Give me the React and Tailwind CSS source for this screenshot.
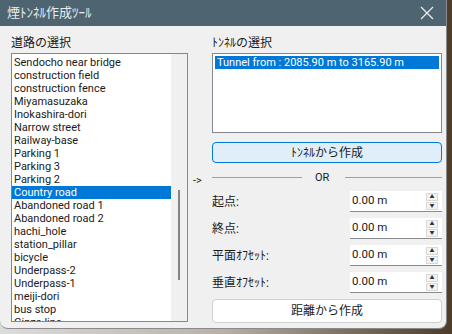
import React from "react";

const roads = [
  "Sendocho near bridge",
  "construction field",
  "construction fence",
  "Miyamasuzaka",
  "Inokashira-dori",
  "Narrow street",
  "Railway-base",
  "Parking 1",
  "Parking 3",
  "Parking 2",
  "Country road",
  "Abandoned road 1",
  "Abandoned road 2",
  "hachi_hole",
  "station_pillar",
  "bicycle",
  "Underpass-2",
  "Underpass-1",
  "meiji-dori",
  "bus stop",
  "Ginza line",
];

const fields = ["起点:", "終点:", "平面ｵﾌｾｯﾄ:", "垂直ｵﾌｾｯﾄ:"];

function SpinBox() {
  return (
    <div className="flex h-[21px] w-[92px] items-center bg-white border-b border-[#8a8a8a]">
      <span className="flex-1 pl-[2px] text-[11.5px] text-[#1a1a1a]">0.00 m</span>
      <div className="mr-[4px] flex flex-col gap-[1px]">
        <span className="flex h-[8px] w-[12px] items-center justify-center border border-[#d8d8d8] bg-[#f3f3f3] text-[5px] leading-none text-[#333]">
          ▲
        </span>
        <span className="flex h-[8px] w-[12px] items-center justify-center border border-[#d8d8d8] bg-[#f3f3f3] text-[5px] leading-none text-[#333]">
          ▼
        </span>
      </div>
    </div>
  );
}

export default function App() {
  return (
    <div
      className="w-[452px] h-[334px] overflow-hidden bg-gradient-to-r from-[#dcdcdc] via-[#b8b0a4] to-[#4e3c2a]"
      style={{ fontFamily: 'Roboto, "Noto Sans CJK JP", sans-serif' }}>
      <div className="flex h-[329px] w-[447px] flex-col overflow-hidden rounded-b-[8px] border-r border-b border-[#8a8a8a] bg-[#f0f0f0]">
        {/* title bar */}
        <div className="flex h-[26px] items-center justify-between bg-[#4f6471] pl-[7px] pr-[10px]">
          <span className="text-[13px] text-[#e8ecef]">煙ﾄﾝﾈﾙ作成ﾂｰﾙ</span>
          <svg width="14" height="14" viewBox="0 0 14 14" className="mr-[2px]">
            <path d="M1 1 L13 13 M13 1 L1 13" stroke="#e8ecef" strokeWidth="1.3" />
          </svg>
        </div>

        <div className="flex flex-1 pl-[11px] pt-[7px] text-[12px] text-[#1a1a1a]">
          {/* roads */}
          <div className="flex w-[177px] flex-col">
            <div className="h-[20px] text-[12px] leading-[20px]">道路の選択</div>
            <div className="flex h-[269px] border border-[#828790] bg-white">
              <div className="flex-1 overflow-hidden pt-[2px] text-[11px]">
                {roads.map((r) => (
                  <div
                    key={r}
                    className={`h-[13px] overflow-hidden pl-[2px] leading-[13px] whitespace-nowrap ${
                      r === "Country road" ? "bg-[#0078d7] text-white" : ""
                    }`}>
                    {r}
                  </div>
                ))}
              </div>
              <div className="w-[16px] bg-[#f0f0f0] pt-[136px] flex justify-center">
                <div className="h-[90px] w-[2px] bg-[#858585]" />
              </div>
            </div>
          </div>

          {/* arrow column */}
          <div className="w-[24px] pt-[140px] pl-[5px] text-[11px]">-&gt;</div>

          {/* tunnel side */}
          <div className="flex w-[230px] flex-col">
            <div className="h-[20px] text-[12px] leading-[20px]">ﾄﾝﾈﾙの選択</div>
            <div className="h-[80px] border border-[#828790] bg-white p-[2px]">
              <div className="h-[13px] bg-[#0078d7] pl-[2px] text-[11px] leading-[13px] text-white whitespace-nowrap">
                Tunnel from : 2085.90 m to 3165.90 m
              </div>
            </div>
            <button
              type="button"
              className="mt-[9px] h-[21px] rounded-[4px] border border-[#0078d4] bg-[#e0eef9] text-[12px] leading-none">
              ﾄﾝﾈﾙから作成
            </button>

            <div className="mt-[8px] flex h-[12px] items-center">
              <div className="h-px w-[90px] bg-[#a0a0a0]" />
              <span className="ml-[13px] w-[16px] text-[11px] leading-none">OR</span>
              <div className="ml-[14px] h-px flex-1 bg-[#a0a0a0]" />
            </div>

            <div className="mt-[8px] flex flex-col gap-[6px]">
              {fields.map((f) => (
                <div key={f} className="flex h-[21px] items-center justify-between">
                  <span className="text-[12px]">{f}</span>
                  <SpinBox />
                </div>
              ))}
            </div>

            <button
              type="button"
              className="mt-[6px] h-[24px] rounded-[4px] border border-[#d0d0d0] bg-white text-[12px] leading-none">
              距離から作成
            </button>
          </div>
        </div>
      </div>
    </div>
  );
}
